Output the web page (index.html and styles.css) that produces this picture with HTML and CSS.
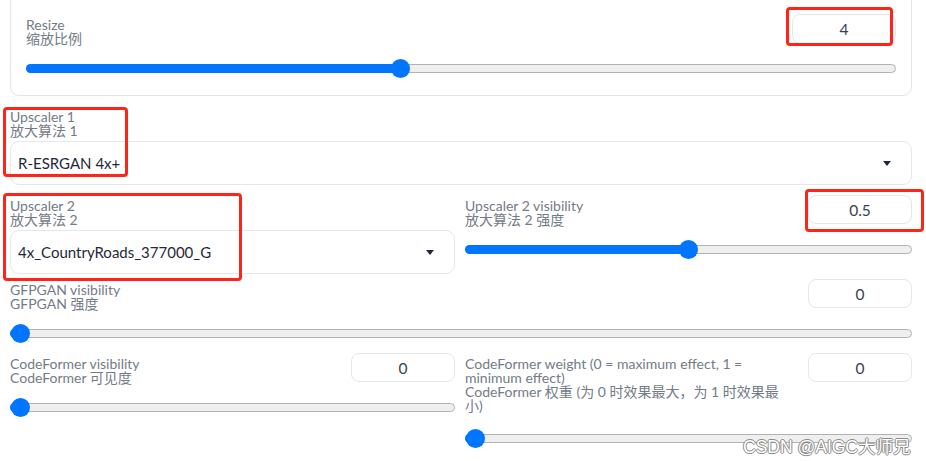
FILE: index.html
```html
<!DOCTYPE html>
<html lang="zh">
<head>
<meta charset="utf-8">
<link rel="stylesheet" href="styles.css">
</head>
<body>
<div class="page">
  <div class="card">
    <div class="head">
      <div class="label">Resize<br>缩放比例</div>
      <div class="num">4</div>
    </div>
    <div class="slider"><div class="track" style="--p:0.429"><div class="fill"></div><div class="thumb"></div></div></div>
  </div>

  <div class="block">
    <div class="label">Upscaler 1<br>放大算法 1</div>
    <div class="dropdown"><span>R-ESRGAN 4x+</span><span class="caret"></span></div>
  </div>

  <div class="row">
    <div class="col">
      <div class="label">Upscaler 2<br>放大算法 2</div>
      <div class="dropdown"><span>4x_CountryRoads_377000_G</span><span class="caret"></span></div>
    </div>
    <div class="col">
      <div class="head">
        <div class="label">Upscaler 2 visibility<br>放大算法 2 强度</div>
        <div class="num">0.5</div>
      </div>
      <div class="slider"><div class="track" style="--p:0.5"><div class="fill"></div><div class="thumb"></div></div></div>
    </div>
  </div>

  <div class="block block-gfp">
    <div class="head">
      <div class="label">GFPGAN visibility<br>GFPGAN 强度</div>
      <div class="num">0</div>
    </div>
    <div class="slider"><div class="track" style="--p:0"><div class="fill"></div><div class="thumb"></div></div></div>
  </div>

  <div class="row row-cf">
    <div class="col">
      <div class="head">
        <div class="label">CodeFormer visibility<br>CodeFormer 可见度</div>
        <div class="num">0</div>
      </div>
      <div class="slider"><div class="track" style="--p:0"><div class="fill"></div><div class="thumb"></div></div></div>
    </div>
    <div class="col">
      <div class="head">
        <div class="label">CodeFormer weight (0 = maximum effect, 1 =<br>minimum effect)<br>CodeFormer 权重 (为 0 时效果最大，为 1 时效果最<br>小)</div>
        <div class="num">0</div>
      </div>
      <div class="slider slider-weight"><div class="track" style="--p:0"><div class="fill"></div><div class="thumb"></div></div></div>
    </div>
  </div>

  <div class="mark mark-0"></div>
  <div class="mark mark-1"></div>
  <div class="mark mark-2"></div>
  <div class="mark mark-3"></div>
  <div class="watermark">CSDN @AIGC大师兄</div>
</div>
</body>
</html>
```

FILE: styles.css
```css
html, body {
  margin: 0;
  padding: 0;
  background: #ffffff;
  overflow: hidden;
}
body {
  width: 926px;
  height: 461px;
  font-family: "Lato", "Noto Sans CJK SC", sans-serif;
}
.page {
  position: relative;
  display: flow-root;
  width: 902px;
  padding-left: 10px;
}
.card {
  margin-top: -20px;
  border: 1px solid #e3e5e8;
  border-radius: 9px;
  padding: 33px 15px 17px 15px;
}
.head {
  display: flex;
  justify-content: space-between;
  align-items: flex-start;
}
.label {
  font-size: 14px;
  line-height: 14px;
  color: #737b87;
  padding-top: 4px;
  white-space: nowrap;
}
.num {
  flex: none;
  width: 102px;
  height: 27px;
  border: 1px solid #e5e7eb;
  border-radius: 8px;
  display: flex;
  align-items: center;
  justify-content: center;
  font-size: 15.5px;
  color: #374151;
}
.card .num {
  height: 28px;
}
.slider {
  margin-top: 12px;
  height: 20px;
  display: flex;
  align-items: center;
}
.slider-weight {
  margin-top: 15px;
}
.track {
  position: relative;
  flex: 1;
  height: 7px;
  background: #efefef;
  border: 1px solid #b2b2b2;
  border-radius: 5px;
}
.fill {
  position: absolute;
  left: -1px;
  top: -1px;
  bottom: -1px;
  width: calc((100% - 19px) * var(--p) + 10px);
  background: #0075ff;
  border-radius: 5px;
}
.thumb {
  position: absolute;
  top: 50%;
  left: calc((100% - 19px) * var(--p));
  width: 19px;
  height: 19px;
  margin-top: -9.5px;
  border-radius: 50%;
  background: #0075ff;
}
.block {
  margin-top: 10px;
}
.dropdown {
  margin-top: 3px;
  height: 42px;
  border: 1px solid #e5e7eb;
  border-radius: 9px;
  display: flex;
  align-items: center;
  justify-content: space-between;
  padding: 0 20px 0 7px;
  font-size: 15px;
  color: #1f2937;
}
.caret {
  width: 0;
  height: 0;
  border-left: 4.5px solid transparent;
  border-right: 4.5px solid transparent;
  border-top: 5px solid #1f2937;
}
.row {
  margin-top: 10px;
  display: grid;
  grid-template-columns: 445px 447px;
  column-gap: 10px;
  align-items: start;
}
.block-gfp {
  margin-top: 5px;
}
.row-cf {
  margin-top: 10px;
}
.mark {
  position: absolute;
  border: 3px solid #ff2318;
  border-radius: 4px;
}
.mark-0 {
  left: 786px;
  top: 7px;
  width: 101px;
  height: 33px;
}
.mark-1 {
  left: 3px;
  top: 107px;
  width: 119px;
  height: 64px;
}
.mark-2 {
  left: 3px;
  top: 193px;
  width: 233px;
  height: 82px;
}
.mark-3 {
  left: 805px;
  top: 189px;
  width: 113px;
  height: 37px;
}
.watermark {
  position: absolute;
  left: 743px;
  top: 437px;
  font-family: "Liberation Sans", "Noto Sans CJK SC", sans-serif;
  font-size: 17.5px;
  line-height: 20px;
  color: #ffffff;
  text-shadow: 1px 0 0 #8a8a8a, -1px 0 0 #8a8a8a, 0 1px 0 #8a8a8a, 0 -1px 0 #8a8a8a;
  white-space: nowrap;
}
```
